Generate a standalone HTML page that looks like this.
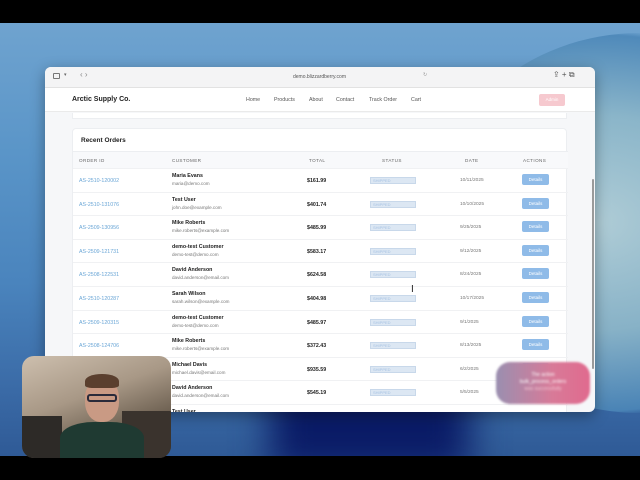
<!DOCTYPE html>
<html><head><meta charset="utf-8"><style>
*{margin:0;padding:0;box-sizing:border-box}
body{width:640px;height:480px;overflow:hidden;background:#000;font-family:"Liberation Sans",sans-serif;position:relative}
.desk{position:absolute;left:0;top:23px;width:640px;height:433px;background:linear-gradient(180deg,#6fa3cf 0%,#5a95c8 30%,#4a84bd 60%,#3a6aa6 85%,#2f5a96 100%);overflow:hidden}
.arc{position:absolute;left:430px;top:10px;width:420px;height:380px;border-radius:50%;background:radial-gradient(ellipse at 40% 50%,#b9d3d8 0%,#8fb8c9 40%,#4c87b8 70%,transparent 72%);opacity:.9}
.dark{position:absolute;left:270px;top:360px;width:200px;height:90px;background:#0a1b66;filter:blur(18px)}
.win{position:absolute;left:45px;top:67px;width:550px;height:345px;background:#f6f7f9;border-radius:6px;overflow:hidden;box-shadow:0 4px 14px rgba(0,0,0,.35)}
.tb{height:21px;background:#f4f4f5;border-bottom:1px solid #e2e2e2;position:relative;font-size:5px;color:#666}
.nav{height:24px;background:#fff;border-bottom:1px solid #eaeaea;position:relative}
.nav .l{position:absolute;top:9px;font-size:5.3px;color:#555}
.card{position:absolute;left:27px;top:61px;width:495px;height:300px;background:#fff;border:1px solid #eceef1;border-radius:4px}
.t{position:absolute;white-space:nowrap}
.row{position:absolute;left:0;width:495px;height:23.6px;border-top:1px solid #f0f1f3}
.id{color:#6aa6d6;font-size:5.3px;left:6px;top:9px}
.nm{font-size:5.3px;font-weight:bold;color:#222;left:99px;top:4px}
.em{font-size:4.6px;color:#777;left:99px;top:12px}
.tot{font-size:5.3px;font-weight:bold;color:#222;left:234px;top:9px}
.st{left:297px;top:8px;width:46px;height:7px;background:#dce7f3;border:1px solid #c8d8ea;font-size:4px;color:#a6c2e2;padding-left:2px;line-height:5px}
.dt{font-size:4.8px;color:#777;left:387px;top:9px}
.bt{left:449px;top:5px;width:27px;height:11px;background:#8fbbe8;border-radius:2px;color:#fff;font-size:4.5px;text-align:center;line-height:11px}
</style></head><body>
<div class="desk"><div class="arc"></div><div class="dark"></div></div>
<div class="win">
 <div class="tb">
  <span class="t" style="left:8px;top:6px;width:7px;height:6px;border:1px solid #777;border-radius:1px"></span>
  <span class="t" style="left:19px;top:5px">▾</span>
  <span class="t" style="left:35px;top:3px;font-size:8px;color:#888">‹ ›</span>
  <span class="t" style="left:248px;top:7px;color:#555">demo.blizzardberry.com</span>
  <span class="t" style="left:378px;top:5px;color:#999">↻</span>
  <span class="t" style="left:508px;top:3px;font-size:8px;color:#555">⇪ + ⧉</span>
 </div>
 <div class="nav">
  <span class="t" style="left:27px;top:8px;font-size:7px;font-weight:bold;color:#222">Arctic Supply Co.</span>
  <span class="l" style="left:201px">Home</span>
  <span class="l" style="left:229px">Products</span>
  <span class="l" style="left:264px">About</span>
  <span class="l" style="left:291px">Contact</span>
  <span class="l" style="left:324px">Track Order</span>
  <span class="l" style="left:366px">Cart</span>
  <span class="t" style="left:494px;top:6px;width:26px;height:12px;background:#f6c9cf;border-radius:2px;color:#fff;font-size:4.5px;text-align:center;line-height:12px">Admin</span>
 </div>
 <div style="position:absolute;left:27px;top:46px;width:495px;height:6px;background:#fff;border:1px solid #eceef1;border-top:none"></div>
 <div class="card">
  <span class="t" style="left:8px;top:8px;font-size:6.5px;font-weight:bold;color:#222">Recent Orders</span>
  <div style="position:absolute;left:0;top:22px;width:495px;height:17px;background:#f8f9fb;border-top:1px solid #eceef1;font-size:4.6px;color:#666;letter-spacing:.4px">
   <span class="t" style="left:6px;top:6px">ORDER ID</span>
   <span class="t" style="left:99px;top:6px">CUSTOMER</span>
   <span class="t" style="left:236px;top:6px">TOTAL</span>
   <span class="t" style="left:309px;top:6px">STATUS</span>
   <span class="t" style="left:392px;top:6px">DATE</span>
   <span class="t" style="left:450px;top:6px">ACTIONS</span>
  </div>
  <div style="position:absolute;left:0;top:39px">
   <div class="row" style="top:0"><span class="t id">AS-2510-120002</span><span class="t nm">Maria Evans</span><span class="t em">maria@demo.com</span><span class="t tot">$161.99</span><span class="t st">SHIPPED</span><span class="t dt">10/11/2025</span><span class="t bt">Details</span></div>
   <div class="row" style="top:23.6px"><span class="t id">AS-2510-131076</span><span class="t nm">Test User</span><span class="t em">john.doe@example.com</span><span class="t tot">$401.74</span><span class="t st">SHIPPED</span><span class="t dt">10/10/2025</span><span class="t bt">Details</span></div>
   <div class="row" style="top:47.2px"><span class="t id">AS-2509-130956</span><span class="t nm">Mike Roberts</span><span class="t em">mike.roberts@example.com</span><span class="t tot">$485.99</span><span class="t st">SHIPPED</span><span class="t dt">9/25/2025</span><span class="t bt">Details</span></div>
   <div class="row" style="top:70.8px"><span class="t id">AS-2509-121731</span><span class="t nm">demo-test Customer</span><span class="t em">demo-test@demo.com</span><span class="t tot">$583.17</span><span class="t st">SHIPPED</span><span class="t dt">9/12/2025</span><span class="t bt">Details</span></div>
   <div class="row" style="top:94.4px"><span class="t id">AS-2508-122531</span><span class="t nm">David Anderson</span><span class="t em">david.anderson@email.com</span><span class="t tot">$624.58</span><span class="t st">SHIPPED</span><span class="t dt">8/24/2025</span><span class="t bt">Details</span></div>
   <div class="row" style="top:118px"><span class="t id">AS-2510-120287</span><span class="t nm">Sarah Wilson</span><span class="t em">sarah.wilson@example.com</span><span class="t tot">$404.98</span><span class="t st">SHIPPED</span><span class="t dt">10/17/2025</span><span class="t bt">Details</span></div>
   <div class="row" style="top:141.6px"><span class="t id">AS-2509-120315</span><span class="t nm">demo-test Customer</span><span class="t em">demo-test@demo.com</span><span class="t tot">$485.97</span><span class="t st">SHIPPED</span><span class="t dt">9/1/2025</span><span class="t bt">Details</span></div>
   <div class="row" style="top:165.2px"><span class="t id">AS-2508-124706</span><span class="t nm">Mike Roberts</span><span class="t em">mike.roberts@example.com</span><span class="t tot">$372.43</span><span class="t st">SHIPPED</span><span class="t dt">8/13/2025</span><span class="t bt">Details</span></div>
   <div class="row" style="top:188.8px"><span class="t id">AS-2506-120011</span><span class="t nm">Michael Davis</span><span class="t em">michael.davis@email.com</span><span class="t tot">$935.59</span><span class="t st">SHIPPED</span><span class="t dt">6/2/2025</span><span class="t bt">Details</span></div>
   <div class="row" style="top:212.4px"><span class="t id">AS-2505-120048</span><span class="t nm">David Anderson</span><span class="t em">david.anderson@email.com</span><span class="t tot">$545.19</span><span class="t st">SHIPPED</span><span class="t dt">5/5/2025</span><span class="t bt">Details</span></div>
   <div class="row" style="top:236px"><span class="t nm">Test User</span></div>
  </div>
 </div>
 <div style="position:absolute;left:547px;top:112px;width:2px;height:190px;background:#9a9a9a;border-radius:1px"></div>
 <span class="t" style="left:366px;top:217px;font-size:10px;color:#222">I</span>
</div>
<div style="position:absolute;left:496px;top:362px;width:94px;height:42px;border-radius:14px;background:linear-gradient(90deg,#9a8fb0,#d87a98 60%,#e06a8e);filter:blur(1px);color:#fff;font-size:5px;text-align:center;padding-top:10px;line-height:7px">The action<br>bulk_process_orders<br><span style="color:#f2c6d3">was successfully</span></div>
<div style="position:absolute;left:22px;top:356px;width:149px;height:102px;border-radius:12px;overflow:hidden;background:linear-gradient(160deg,#cdbfae 0%,#a89886 40%,#6e6152 70%,#4a4038 100%)">
 <div style="position:absolute;left:0;top:60px;width:40px;height:42px;background:#2d2a27"></div>
 <div style="position:absolute;left:100px;top:55px;width:49px;height:47px;background:#3a332d"></div>
 <div style="position:absolute;left:63px;top:22px;width:34px;height:44px;border-radius:45%;background:#c99a84"></div>
 <div style="position:absolute;left:63px;top:18px;width:34px;height:14px;border-radius:50% 50% 20% 20%;background:#5a3f2e"></div>
 <div style="position:absolute;left:65px;top:38px;width:30px;height:8px;border:2px solid #2a2a3a;border-radius:3px"></div>
 <div style="position:absolute;left:38px;top:66px;width:84px;height:40px;border-radius:40% 40% 0 0;background:#1f3a32"></div>
</div>
</body></html>
